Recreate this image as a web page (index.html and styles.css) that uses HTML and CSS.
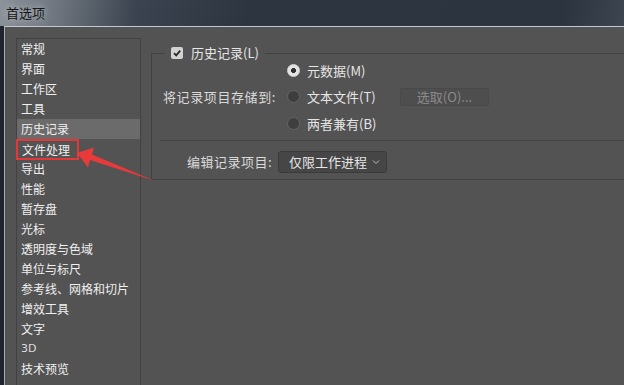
FILE: index.html
```html
<!DOCTYPE html>
<html lang="zh-CN">
<head>
    <meta charset="UTF-8">
    <title>首选项</title>
    <link rel="stylesheet" href="styles.css">
</head>
<body>
    <div class="titlebar">首选项</div>
    <div class="dialog">
        <ul class="nav">
            <li>常规</li>
            <li>界面</li>
            <li>工作区</li>
            <li>工具</li>
            <li class="active">历史记录</li>
            <li><span class="mark">文件处理</span></li>
            <li>导出</li>
            <li>性能</li>
            <li>暂存盘</li>
            <li>光标</li>
            <li>透明度与色域</li>
            <li>单位与标尺</li>
            <li>参考线、网格和切片</li>
            <li>增效工具</li>
            <li>文字</li>
            <li class="latin">3D</li>
            <li>技术预览</li>
        </ul>

        <div class="main">
            <fieldset class="history">
                <legend><span class="checkbox"><svg width="10" height="10" viewBox="0 0 10 10"><path d="M2 5.2 L4.2 7.4 L8.2 2.6" fill="none" stroke="#2a2a2a" stroke-width="1.8"/></svg></span>历史记录(L)</legend>

                <div class="store">
                    <div class="store-label">将记录项目存储到:</div>
                    <div class="options">
                        <div class="option">
                            <span class="radio checked"></span>
                            <span class="option-text">元数据(M)</span>
                        </div>
                        <div class="option">
                            <span class="radio"></span>
                            <span class="option-text">文本文件(T)</span>
                            <button class="pick-btn" disabled>选取(O)...</button>
                        </div>
                        <div class="option">
                            <span class="radio"></span>
                            <span class="option-text">两者兼有(B)</span>
                        </div>
                    </div>
                </div>

                <div class="separator"></div>

                <div class="edit-row">
                    <div class="edit-label">编辑记录项目:</div>
                    <div class="select">
                        <span>仅限工作进程</span>
                        <svg width="8" height="6" viewBox="0 0 8 6"><path d="M1 1.5 L4 4.5 L7 1.5" fill="none" stroke="#bdbdbd" stroke-width="1"/></svg>
                    </div>
                </div>
            </fieldset>
        </div>

        <!-- red callout arrow over the list -->
        <svg class="arrow" width="90" height="40" viewBox="70 145 90 40">
            <polygon points="77,153 94,147.5 92,154.5 155,181 90,160 88,167.5" fill="#e83a3a"/>
        </svg>
    </div>
</body>
</html>
```

FILE: styles.css
```css
* {
    box-sizing: border-box;
}
html, body {
    height: 100%;
}
body {
    margin: 0;
    background-color: #1e252e;
    font-family: "Noto Sans CJK SC", "Noto Sans", sans-serif;
    font-size: 12px;
    overflow: hidden;
}
.titlebar {
    height: 26px;
    padding: 4px 0 0 6px;
    font-size: 13px;
    line-height: 17px;
    color: #151515;
    text-shadow: 0 0 6px #c8ccd2;
    background: linear-gradient(100deg, #8d939b 0%, #6c737c 10%, #3a434f 22%, #2d3540 40%, #2c3440 90%, #3d4550 100%);
}
.dialog {
    position: relative;
    display: flex;
    height: calc(100% - 26px);
    margin-left: 4px;
    padding: 11px 0 0 11px;
    background-color: #535353;
    border-top: 1px solid #c4c9cf;
    border-left: 1px solid #a9adb2;
}
.nav {
    list-style: none;
    width: 125px;
    margin: 0;
    padding: 0;
    border: 1px solid #424242;
    border-bottom: none;
    flex-shrink: 0;
}
.nav li {
    height: 20px;
    line-height: 20px;
    padding-left: 4px;
    color: #f0f0f0;
}
.nav li.active {
    background-color: #6b6b6b;
}
.nav li.latin {
    font-family: "DejaVu Sans", sans-serif;
    font-size: 11px;
    color: #dcdcdc;
}
.nav .mark {
    display: inline-block;
    height: 21px;
    margin-left: -5px;
    padding: 0 7px 0 4px;
    line-height: 18px;
    border: 2px solid #e23838;
}
.main {
    flex: 1;
    padding: 8px 0 0 10px;
}
.history {
    margin: 0;
    padding: 0 0 0 8px;
    height: 134px;
    border: 1px solid #424242;
    border-right: none;
}
.history legend {
    display: flex;
    align-items: center;
    margin-left: 5px;
    padding: 0 6px;
    height: 14px;
    line-height: 14px;
    color: #e6e6e6;
    font-size: 13px;
}
.checkbox {
    display: inline-flex;
    align-items: center;
    justify-content: center;
    width: 12px;
    height: 12px;
    margin-right: 8px;
    background-color: #d2d2d2;
    border-radius: 2px;
}
.store {
    display: flex;
    margin-top: -3px;
}
.store-label {
    width: 127px;
    padding-top: 30px;
    padding-right: 11px;
    text-align: right;
    color: #dadada;
    font-size: 13px;
    line-height: 20px;
    letter-spacing: 0.6px;
    white-space: nowrap;
}
.options {
    display: flex;
    flex-direction: column;
}
.option {
    display: flex;
    align-items: center;
    height: 26.5px;
    color: #e6e6e6;
    font-size: 13px;
}
.radio {
    width: 13px;
    height: 13px;
    margin-right: 7px;
    border-radius: 50%;
    background-color: #3e3e3e;
    border: 1px solid #646464;
}
.radio.checked {
    background: radial-gradient(circle, #2f2f2f 0 2.2px, #e2e2e2 2.8px);
    border-color: #d8d8d8;
}
.option-text {
    width: 85px;
}
.pick-btn {
    width: 89px;
    height: 18px;
    margin-left: 8px;
    padding: 0;
    font-family: inherit;
    font-size: 13px;
    line-height: 16px;
    color: #8b8b8b;
    background-color: #4e4e4e;
    border: 1px solid #494949;
    border-radius: 2px;
}
.separator {
    height: 1px;
    margin-top: 3px;
    background-color: #434343;
}
.edit-row {
    display: flex;
    align-items: center;
    margin-top: 10px;
}
.edit-label {
    width: 118px;
    padding-right: 6px;
    text-align: right;
    color: #dadada;
    font-size: 13px;
    letter-spacing: 0.5px;
    white-space: nowrap;
}
.select {
    display: flex;
    align-items: center;
    justify-content: space-between;
    width: 109px;
    height: 22px;
    padding: 0 6px 0 10px;
    color: #e6e6e6;
    font-size: 13px;
    background-color: #464646;
    border: 1px solid #3b3b3b;
    border-radius: 3px;
}
.arrow {
    position: absolute;
    left: 65px;
    top: 118px;
}
```
